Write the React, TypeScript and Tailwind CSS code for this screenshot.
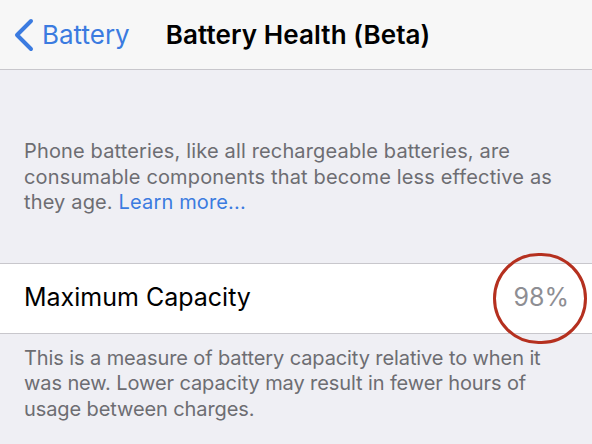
import React from "react";

export default function App() {
  return (
    <div
      className="w-[592px] h-[444px] overflow-hidden bg-[#efeff4]"
      style={{ fontFamily: "Inter, 'Liberation Sans', sans-serif" }}
    >
      <div className="h-[70px] bg-[#f7f7f7] border-b border-[#c8c7cc] flex items-center">
        <svg className="ml-[13px] mt-[1px]" width="21" height="34" viewBox="0 0 21 34" fill="none">
          <path d="M18 3 L4 17 L18 31" stroke="#3b7be0" strokeWidth="4" strokeLinecap="round" strokeLinejoin="round" />
        </svg>
        <span className="ml-[8px] text-[26px] text-[#3b7be0]">Battery</span>
        <span className="ml-[36px] text-[26px] font-semibold text-black tracking-[0.1px]">Battery Health (Beta)</span>
      </div>
      <div className="pt-[69px] pl-[24px] pr-[20px] text-[20px] leading-[25.5px] text-[#6d6d72] tracking-[0.15px]">
        Phone batteries, like all rechargeable batteries, are consumable components that become less effective as they age.{" "}
        <span className="text-[#3b7be0]">Learn more...</span>
      </div>
      <div className="mt-[47px] relative h-[71px] bg-white border-y border-[#c8c7cc] flex items-center justify-between pl-[24px] pr-[23px]">
        <span className="text-[25px] text-black">Maximum Capacity</span>
        <span className="text-[25px] text-[#8e8e93]">98%</span>
        <div className="absolute left-[493px] top-[-11px] w-[94px] h-[91px] rounded-full border-[3px] border-[#b5301f]" />
      </div>
      <div className="pt-[12px] pl-[24px] pr-[20px] text-[20px] leading-[25.5px] text-[#6d6d72] tracking-[-0.1px]">
        This is a measure of battery capacity relative to when it was new. Lower capacity may result in fewer hours of usage between charges.
      </div>
    </div>
  );
}
